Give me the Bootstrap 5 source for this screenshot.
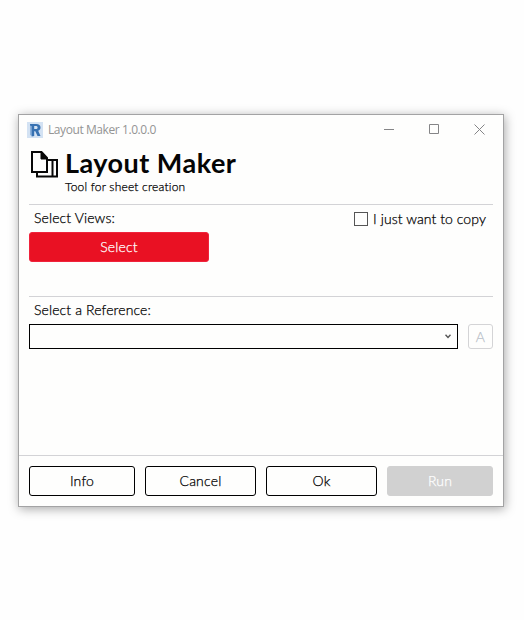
<!DOCTYPE html>
<html lang="en">
<head>
<meta charset="utf-8">
<meta name="viewport" content="width=device-width, initial-scale=1">
<title>Layout Maker</title>
<link href="https://cdn.jsdelivr.net/npm/bootstrap@5.3.0/dist/css/bootstrap.min.css" rel="stylesheet">
<style>
body{min-height:620px;padding:114px 0 0 18px;background:#fefefe;font-family:Lato,"Liberation Sans",sans-serif;font-weight:300;color:#000;font-size:14px;line-height:20px;overflow:hidden}
.win{width:486px;height:393px;border:1px solid #a3a3a4;background:#fefefd;box-shadow:1px 2px 10px rgba(0,0,0,.34)}
.titlebar{height:29px;padding:0 18px 0 8px;font:12px/28px "Open Sans","Noto Sans",sans-serif;color:#949494}
.caption-text{letter-spacing:-.42px;margin-left:5px}
.wincontrols{gap:34px}
.brand{height:60px;padding:7px 0 0 12px}
.brand h1{font-size:27px;line-height:25px;font-weight:700;color:#050505;letter-spacing:.48px;position:relative;top:-1px}
.tagline{font-size:12px;line-height:16px;margin-top:3px;letter-spacing:.2px}
.names{margin-left:7px}
.section{margin:0 10px;border-top:1px solid #d3d3d6}
.views{height:92px}
.reference{height:159px}
.label-row{height:27px;padding:3px 7px 0 5px}
.copy-label{height:22px}
.form-check-input.copy{width:14px;height:14px;border:1px solid #555;border-radius:0;margin:0 5px 0 0;background:#fefefd}
.label-row span,.tagline,.btn{-webkit-text-stroke:.25px currentColor}
.btn{height:30px;padding:0;font-size:14px;line-height:28px;border-radius:3px;font-weight:300;letter-spacing:.2px}
.btn-select{width:180px;background:#e91123;border-color:#f0233c;color:#fff}
.combo{width:429px;height:25px;border:1px solid #000;padding-right:6px}
.btn-a{width:25px;height:25px;line-height:23px;border:1px solid #d4d4d6;color:#b9bec8;background:#fefefd}
.foot{height:51px;border-top:1px solid #d3d3d6;padding:10px 10px 0;gap:10px}
.btn-plain{border:1px solid #000;color:#000;background:#fefefd}
.w-side{width:106px}.w-mid{width:111px}
.btn-run{background:#d1d1d1;border-color:#d1d1d1;color:#fff}
.label-row span{letter-spacing:.12px}
.label-row .copy-label span{letter-spacing:.08px}
</style>
</head>
<body>
<main class="win">
  <header class="titlebar d-flex align-items-center justify-content-between">
    <div class="d-flex align-items-center">
      <svg width="16" height="16" viewBox="0 0 16 16"><rect width="16" height="16" fill="#d3e2f3"/><path d="m3 3 2-1v12l-2-1z" fill="#8db3dd"/><path fill="#3671b2" fill-rule="evenodd" d="M3 2h6c3.200 0 4.500 1.200 4.500 3.500 0 1.700-.8 2.700-2.300 3.300L13.500 14h-3L8.300 9.300H7.200V14l-2.500.5V4L3 3.500zM7.200 4v3h1.500c1.300 0 1.900-.5 1.900-1.500S10 4 8.700 4z"/></svg>
      <span class="caption-text">Layout Maker 1.0.0.0</span>
    </div>
    <div class="wincontrols d-flex align-items-center">
      <svg width="11" height="11" viewBox="0 0 11 11" stroke="#858587" fill="none"><path d="M0 5.500h10"/></svg>
      <svg width="11" height="11" viewBox="0 0 11 11" stroke="#858587" fill="none"><path d="M.5.500h9v9h-9z"/></svg>
      <svg width="11" height="11" viewBox="0 0 11 11" stroke="#858587" fill="none"><path d="m.5.500 10 10m0-10-10 10"/></svg>
    </div>
  </header>
  <section class="brand d-flex">
    <svg width="27" height="27" viewBox="0 0 27 27" fill="none" stroke="#080808" stroke-width="2"><path d="M1 1h9.500L16 7v14H1z"/><path d="M10 1v7h6z" fill="#080808" stroke-width="1"/><path d="M6 21v4.500h20V9H16M21.500 9v16"/></svg>
    <div class="names"><h1 class="m-0">Layout Maker</h1><div class="tagline">Tool for sheet creation</div></div>
  </section>
  <section class="section views">
    <div class="label-row d-flex justify-content-between align-items-start">
      <span>Select Views:</span>
      <label class="copy-label d-flex align-items-center"><input class="form-check-input copy" type="checkbox"><span>I just want to copy</span></label>
    </div>
    <button class="btn btn-select d-block" type="button">Select</button>
  </section>
  <section class="section reference">
    <div class="label-row"><span>Select a Reference:</span></div>
    <div class="d-flex justify-content-between">
      <div class="combo d-flex align-items-center justify-content-end" role="combobox" aria-expanded="false" aria-label="Reference"><svg width="6" height="5" viewBox="0 0 6 5" fill="none" stroke="#555" stroke-width="1.400"><path d="m.5.800 2.500 2.700L5.500.800"/></svg></div>
      <button class="btn btn-a" type="button">A</button>
    </div>
  </section>
  <footer class="foot d-flex">
    <button class="btn btn-plain w-side" type="button">Info</button>
    <button class="btn btn-plain w-mid" type="button">Cancel</button>
    <button class="btn btn-plain w-mid" type="button">Ok</button>
    <button class="btn btn-run w-side" type="button">Run</button>
  </footer>
</main>
<script src="https://cdn.jsdelivr.net/npm/bootstrap@5.3.0/dist/js/bootstrap.bundle.min.js"></script>
</body>
</html>
